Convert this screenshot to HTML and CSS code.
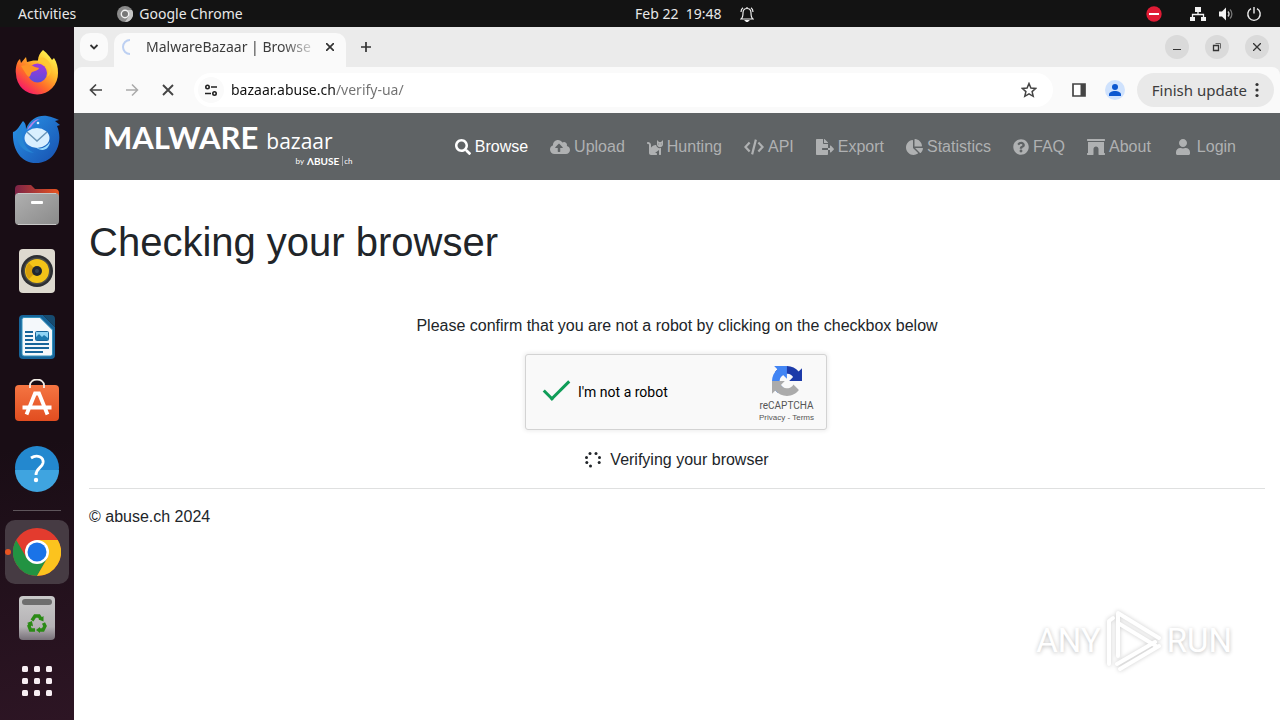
FILE: index.html
```html
<!DOCTYPE html>
<html lang="en">

<head>
    <meta charset="UTF-8">
    <meta name="viewport" content="width=device-width, initial-scale=1.0">
    <title>MalwareBazaar | Browse</title>
    <link rel="stylesheet" href="styles.css">
</head>

<body>
    <!-- Desktop top bar -->
    <header class="topbar">
        <div class="topbar-group topbar-left">
            <button class="topbar-btn">Activities</button>
            <button class="topbar-btn topbar-app">
                <svg width="16" height="16" viewBox="0 0 16 16"><circle cx="8" cy="8" r="8" fill="#8a8a8a"/><path d="M8 4h7A8 8 0 0 1 8 16l4-6" fill="#c4c4c4"/><circle cx="8" cy="8" r="3.7" fill="#777" stroke="#f2f2f2" stroke-width="1.4"/></svg>
                Google Chrome
            </button>
        </div>
        <button class="topbar-btn topbar-clock">
            <span>Feb 22&nbsp; 19:48</span>
            <svg width="14" height="16" viewBox="0 0 14 16" fill="none" stroke="#eee" stroke-width="1.2"><path d="M1 13c2-1.500 2-3 2-6 0-3 1.500-4.500 4-4.500S11 4 11 7c0 3 0 4.500 2 6zM1 6c0-2 1-3.500 2-4.200M13 6c0-2-1-3.500-2-4.200M7 2.500V1"/><path d="M5.500 14.500h3L7 16z" fill="#eee"/></svg>
        </button>
        <div class="topbar-group topbar-right">
            <svg class="status-alert" width="16" height="16" viewBox="0 0 16 16"><circle cx="8" cy="8" r="7.700" fill="#e01b35"/><path d="M3 8h10" stroke="#fff" stroke-width="2"/></svg>
            <svg width="16" height="16" viewBox="0 0 16 16" fill="#f2f2f2"><path d="M5 1h6v5H5zM0 11h5v4H0zM11 11h5v4h-5z"/><path d="M8 6v3M2.500 11V8.500h11V11" fill="none" stroke="#f2f2f2" stroke-width="1.300"/></svg>
            <svg width="16" height="16" viewBox="0 0 16 16"><path d="M1 5.500h3L8 1.500v13l-4-4H1z" fill="#f2f2f2"/><path d="M10 5.500c1.300 1.500 1.300 3.500 0 5" fill="none" stroke="#ccc" stroke-width="1.300"/><path d="M12 3.500c2.500 2.500 2.500 6.500 0 9" fill="none" stroke="#777" stroke-width="1.300"/></svg>
            <svg width="16" height="16" viewBox="0 0 16 16" fill="none" stroke="#eee" stroke-width="1.400"><path d="M5 2.700a6.200 6.200 0 1 0 6 0M8 1v6.500"/></svg>
        </div>
    </header>

    <div class="desktop">
        <!-- Dock -->
        <nav class="dock" aria-label="Dock">
            <button class="dock-item" aria-label="Firefox">
                <svg width="48" height="48" viewBox="0 0 48 48">
                    <defs>
                        <linearGradient id="fox" x1=".85" y1=".1" x2=".2" y2=".95"><stop offset="0" stop-color="#fff44f"/><stop offset=".35" stop-color="#ffb52a"/><stop offset=".65" stop-color="#ff6a2a"/><stop offset="1" stop-color="#f5156c"/></linearGradient>
                        <linearGradient id="globe" x1="0" y1="0" x2="0" y2="1"><stop offset="0" stop-color="#a238df"/><stop offset="1" stop-color="#5b4cd8"/></linearGradient>
                    </defs>
                    <path d="M30 1c5 4 7 7 9 10l2-2c3 5 4 9 4 15a21 21 0 0 1-42 1c-1-6 1-13 4-15l1 4 5-6 1 5c4-1 8-2 11-1 0-5 2-8 5-11z" fill="url(#fox)"/>
                    <circle cx="24.500" cy="24" r="9.500" fill="url(#globe)"/>
                    <path d="M8 17c7-2 11-1 14 1l4 1c-1 3-5 3-7 4-2 2-1 4-3 5-3-2-4-5-8-11z" fill="#ff9427"/>
                    <path d="M24 13c10-1 14 8 10 15 7-5 5-14-1-18-4-3-8-1-9 3z" fill="#ffc832"/>
                </svg>
            </button>
            <button class="dock-item" aria-label="Thunderbird">
                <svg width="50" height="50" viewBox="0 0 50 50">
                    <defs><linearGradient id="bird" x1="0" y1="0" x2="1" y2="1"><stop offset="0" stop-color="#2a96ea"/><stop offset="1" stop-color="#174fae"/></linearGradient></defs>
                    <path d="M1 18c4-1 7-7 10-11 3 3 3 5 3 8 4-10 12-14 21-13 5 1 8 2 12 4l-4 1 5 4-3 1c7 16-2 37-21 37C8 49 0 34 1 18z" fill="url(#bird)"/>
                    <path d="M15 16c4-8 9-11 13-11-5 2-7 5-9 8z" fill="#b582e8"/>
                    <path d="M5 18l5-7c-1 11 0 22 12 28C10 38 4 29 5 18z" fill="#2685d4"/>
                    <ellipse cx="25" cy="24" rx="12.500" ry="10" fill="#d9efff"/>
                    <path d="M15 18l10 9 10-9" fill="none" stroke="#6c96b8" stroke-width="1.500"/>
                    <path d="M23 33c5 3 11 1 15-5-1 7-7 11-15 5z" fill="#9adcff"/>
                    <circle cx="26" cy="9" r="1.300" fill="#d8f0ff"/>
                </svg>
            </button>
            <button class="dock-item" aria-label="Files">
                <svg width="48" height="48" viewBox="0 0 48 48">
                    <defs>
                        <linearGradient id="folder" x1="0" x2="1"><stop offset="0" stop-color="#7b2347"/><stop offset="1" stop-color="#e95420"/></linearGradient>
                        <linearGradient id="drawer" x1="0" y1="0" x2="1" y2="1"><stop offset="0" stop-color="#b0b0b0"/><stop offset="1" stop-color="#8a8a8a"/></linearGradient>
                    </defs>
                    <path d="M2 8a4 4 0 0 1 4-4h12l4 4h20a4 4 0 0 1 4 4v12H2z" fill="url(#folder)"/>
                    <rect x="2" y="12" width="44" height="32" rx="4" fill="url(#drawer)"/>
                    <path d="M5 12.500h38M5 43.500h38" stroke="#c8c8c8"/>
                    <rect x="18" y="20" width="12" height="3" rx="1" fill="#fff"/>
                </svg>
            </button>
            <button class="dock-item" aria-label="Rhythmbox">
                <svg width="48" height="48" viewBox="0 0 48 48">
                    <rect x="6" y="2" width="36" height="44" rx="4" fill="#ddd9cf"/>
                    <circle cx="24" cy="24" r="16" fill="#2d2f33"/>
                    <circle cx="24" cy="24" r="13.500" fill="#4b4c48"/>
                    <circle cx="24" cy="24" r="12" fill="#f2c318"/>
                    <path d="M16 16a11.500 11.500 0 0 0 0 16l8-8z" fill="#d69e0b"/>
                    <circle cx="24" cy="24" r="5" fill="#202730"/>
                    <circle cx="24" cy="24" r="2" fill="#34424f"/>
                </svg>
            </button>
            <button class="dock-item" aria-label="LibreOffice Writer">
                <svg width="48" height="48" viewBox="0 0 48 48">
                    <path d="M10 2h20l12 12v28a4 4 0 0 1-4 4H10a4 4 0 0 1-4-4V6a4 4 0 0 1 4-4z" fill="#17659a"/>
                    <path d="M30 2h8a4 4 0 0 1 4 4v8z" fill="#164b70"/>
                    <path d="M11 4.500h16L39.500 17v24a2 2 0 0 1-2 2H11a2 2 0 0 1-2-2V6.500a2 2 0 0 1 2-2z" fill="#f4f8fb" stroke="#3292bd"/>
                    <path d="M12 19h8M12 23h8M12 27h8M12 31h24M12 35h24M12 39h18" stroke="#17659a" stroke-width="2"/>
                    <rect x="22.500" y="18.500" width="13" height="9" rx="1" fill="#8fd3f4" stroke="#17659a"/>
                    <path d="M23 27v-3l3-3 3 3 2-2 4 3v2z" fill="#1d79af"/>
                </svg>
            </button>
            <button class="dock-item" aria-label="Ubuntu Software">
                <svg width="48" height="48" viewBox="0 0 48 48">
                    <defs><linearGradient id="bag" x1="0" y1="0" x2="0" y2="1"><stop offset="0" stop-color="#f57542"/><stop offset="1" stop-color="#e14d20"/></linearGradient></defs>
                    <rect x="2" y="6" width="44" height="36" rx="4" fill="url(#bag)"/>
                    <path d="M17 9V6a7 5.500 0 0 1 14 0v3" fill="none" stroke="#f3ede6" stroke-width="1.800"/>
                    <path d="M13.500 35.500l8.500-21h4l8.500 21M9.500 28.500h29" fill="none" stroke="#fff" stroke-width="3.800"/>
                </svg>
            </button>
            <button class="dock-item" aria-label="Help">
                <svg width="48" height="48" viewBox="0 0 48 48">
                    <circle cx="24" cy="23" r="22" fill="#2388cf"/>
                    <path d="M2 25h44a22 22 0 0 1-44 0z" fill="#3fa4e0"/>
                    <path d="M18 13c6-4 13-1 12 5-1 5-7 5-7 12" fill="none" stroke="#fff" stroke-width="2.800"/>
                    <circle cx="23" cy="35" r="2.200" fill="#fff"/>
                </svg>
            </button>
            <hr class="dock-line">
            <button class="dock-item dock-active" aria-label="Google Chrome">
                <svg width="48" height="48" viewBox="0 0 48 48">
                    <circle cx="24" cy="24" r="24" fill="#e33b2e"/>
                    <path d="M3.200 12A24 24 0 0 0 24 48l10.400-18-10.400 6-10.400-6z" fill="#229342"/>
                    <path d="M24 12h20.800A24 24 0 0 1 24 48l10.400-18z" fill="#fcc31e"/>
                    <circle cx="24" cy="24" r="12" fill="#fff"/>
                    <circle cx="24" cy="24" r="9.500" fill="#1a73e8"/>
                </svg>
            </button>
            <button class="dock-item" aria-label="Trash">
                <svg width="48" height="48" viewBox="0 0 48 48">
                    <defs><linearGradient id="bin" x1="0" y1="0" x2="0" y2="1"><stop offset="0" stop-color="#c9c9c9"/><stop offset=".7" stop-color="#b5b2b5"/><stop offset="1" stop-color="#777078"/></linearGradient></defs>
                    <rect x="6" y="2" width="36" height="44" rx="4" fill="url(#bin)"/>
                    <rect x="9" y="5" width="30" height="6" rx="3" fill="#6e6e6e"/>
                    <g fill="none" stroke="#2b8a16" stroke-width="3.400">
                        <path d="M19 26.500l3-4.500h4l2 3"/>
                        <path d="M30.500 29l1.500 3-2 4h-4"/>
                        <path d="M22 36h-4.500l-1.500-4 2-3"/>
                    </g>
                    <path d="M30.500 22v5.500l-5-2zM27 33v6l-4-3zM14 29l5-2 1 5.500z" fill="#2b8a16"/>
                </svg>
            </button>
            <button class="dock-item dock-apps" aria-label="Show applications">
                <svg width="30" height="30" viewBox="0 0 30 30" fill="#f7eef3"><rect width="6" height="6" rx="1.500"/><rect x="12" width="6" height="6" rx="1.500"/><rect x="24" width="6" height="6" rx="1.500"/><rect y="12" width="6" height="6" rx="1.500"/><rect x="12" y="12" width="6" height="6" rx="1.500"/><rect x="24" y="12" width="6" height="6" rx="1.500"/><rect y="24" width="6" height="6" rx="1.500"/><rect x="12" y="24" width="6" height="6" rx="1.500"/><rect x="24" y="24" width="6" height="6" rx="1.500"/></svg>
            </button>
        </nav>

        <!-- Browser window -->
        <div class="browser">
            <div class="tabstrip">
                <button class="tab-search" aria-label="Search tabs">
                    <svg width="10" height="10" viewBox="0 0 10 10" fill="none" stroke="#333" stroke-width="1.800"><path d="M1.500 3L5 6.500 8.500 3"/></svg>
                </button>
                <div class="tab">
                    <svg width="16" height="16" viewBox="0 0 16 16" fill="none" stroke="#bdd0f2" stroke-width="2"><path d="M9 1a7 7 0 0 0 0 14"/></svg>
                    <span class="tab-title">MalwareBazaar | Browse</span>
                    <button class="icon-btn tab-close" aria-label="Close tab">
                        <svg width="8" height="8" viewBox="0 0 8 8" stroke="#333" stroke-width="1.700"><path d="M0 0l8 8M8 0L0 8"/></svg>
                    </button>
                </div>
                <button class="icon-btn tab-new" aria-label="New tab">
                    <svg width="12" height="12" viewBox="0 0 12 12" stroke="#333" stroke-width="1.700"><path d="M6 1v10M1 6h10"/></svg>
                </button>
                <div class="window-controls">
                    <button aria-label="Minimize"><svg width="10" height="10" viewBox="0 0 10 10"><path d="M1 7.500h8" stroke="#333"/></svg></button>
                    <button aria-label="Restore"><svg width="10" height="10" viewBox="0 0 10 10" fill="none" stroke="#333"><path d="M1.500 3.500h5v5h-5z" stroke-width="1.300"/><path d="M3.500 1.500h5v5" stroke="#666"/></svg></button>
                    <button aria-label="Close"><svg width="8" height="8" viewBox="0 0 8 8" stroke="#333" stroke-width="1.300"><path d="M0 0l8 8M8 0L0 8"/></svg></button>
                </div>
            </div>

            <div class="toolbar">
                <div class="toolbar-nav">
                    <button class="icon-btn" aria-label="Back"><svg width="14" height="14" viewBox="0 0 14 14" fill="none" stroke="#444" stroke-width="1.700"><path d="M13 7H2M7 1.500L1.500 7 7 12.500"/></svg></button>
                    <button class="icon-btn" aria-label="Forward"><svg width="14" height="14" viewBox="0 0 14 14" fill="none" stroke="#aaa" stroke-width="1.500"><path d="M1 7h11M7 1.500L12.500 7 7 12.500"/></svg></button>
                    <button class="icon-btn" aria-label="Stop loading"><svg width="14" height="14" viewBox="0 0 14 14" stroke="#444" stroke-width="1.900"><path d="M2 2l10 10M12 2L2 12"/></svg></button>
                </div>
                <div class="address">
                    <button class="site-info" aria-label="Site information">
                        <svg width="14" height="14" viewBox="0 0 14 14" fill="none" stroke="#222" stroke-width="1.600"><circle cx="3.500" cy="4" r="1.700"/><path d="M7 4h6M1 10.500h6"/><circle cx="10.500" cy="10.500" r="1.700"/></svg>
                    </button>
                    <input class="address-input" type="text" aria-label="Address" value="bazaar.abuse.ch/verify-ua/">
                    <button class="icon-btn" aria-label="Bookmark this tab"><svg width="16" height="16" viewBox="0 0 16 16" fill="none" stroke="#444" stroke-width="1.500"><path d="M8 1.500l1.900 4.500 4.900.4-3.700 3.200 1.100 4.700L8 11.800l-4.200 2.500 1.100-4.700L1.200 6.400 6.100 6z"/></svg></button>
                </div>
                <button class="icon-btn" aria-label="Side panel"><svg width="16" height="16" viewBox="0 0 16 16"><path d="M2 2h12v12H2z" fill="#fff" stroke="#444" stroke-width="1.700"/><path d="M9.500 2H14v12H9.500z" fill="#444"/></svg></button>
                <button class="icon-btn" aria-label="Profile"><svg width="20" height="20" viewBox="0 0 20 20"><circle cx="10" cy="10" r="10" fill="#cfe2fd"/><circle cx="10" cy="7" r="3" fill="#0b57d0"/><path d="M4 16v-1.500c0-2 3-3.500 6-3.500s6 1.500 6 3.500V16z" fill="#0b57d0"/></svg></button>
                <button class="update-btn">Finish update
                    <svg width="4" height="16" viewBox="0 0 4 16" fill="#333"><circle cx="2" cy="2.500" r="1.600"/><circle cx="2" cy="8" r="1.600"/><circle cx="2" cy="13.500" r="1.600"/></svg>
                </button>
            </div>

            <!-- Page -->
            <div class="page">
                <nav class="navbar">
                    <a class="brand" href="#">
                        <span class="brand-top"><span class="brand-name">MALWARE</span><span class="brand-sub">bazaar</span></span>
                        <span class="brand-by"><span class="brand-small">by</span><span class="brand-abuse">ΛBUSE</span><span class="brand-ch">ch</span></span>
                    </a>
                    <ul class="nav-links">
                        <li><a class="active" href="#"><svg viewBox="0 0 512 512"><path d="M505 442.7L405.3 343c-4.500-4.500-10.600-7-17-7H372c27.600-35.300 44-79.700 44-128C416 93.100 322.900 0 208 0S0 93.100 0 208s93.100 208 208 208c48.300 0 92.700-16.400 128-44v16.300c0 6.400 2.500 12.500 7 17l99.700 99.700c9.400 9.400 24.600 9.400 33.900 0l28.300-28.300c9.400-9.400 9.400-24.600.1-34zM208 336c-70.700 0-128-57.200-128-128 0-70.700 57.200-128 128-128 70.700 0 128 57.200 128 128 0 70.700-57.200 128-128 128z"/></svg>Browse</a></li>
                        <li><a href="#"><svg viewBox="0 0 640 512"><path d="M537.6 226.6c4.100-10.700 6.400-22.400 6.400-34.600 0-53-43-96-96-96-19.700 0-38.100 6-53.300 16.200C367 64.200 315.300 32 256 32c-88.400 0-160 71.600-160 160 0 2.700.1 5.400.2 8.100C40.200 219.800 0 273.200 0 336c0 79.500 64.500 144 144 144h368c70.700 0 128-57.300 128-128 0-61.900-44-113.600-102.400-125.400zM393.400 288H328v112c0 8.800-7.200 16-16 16h-48c-8.800 0-16-7.200-16-16V288h-65.400c-14.300 0-21.400-17.200-11.300-27.300l105.400-105.400c6.200-6.200 16.400-6.200 22.600 0l105.400 105.400c10.100 10.100 2.900 27.300-11.300 27.300z"/></svg>Upload</a></li>
                        <li><a href="#"><svg viewBox="0 0 512 512"><path d="M290.590 192c-20.180 0-106.820 1.980-162.590 85.950V192c0-52.940-43.060-96-96-96-17.670 0-32 14.330-32 32s14.330 32 32 32c17.640 0 32 14.360 32 32v256c0 35.300 28.700 64 64 64h176c8.840 0 16-7.160 16-16v-16c0-17.670-14.330-32-32-32h-32l128-96v144c0 8.840 7.160 16 16 16h32c8.840 0 16-7.160 16-16V289.860c-10.290 2.670-20.890 4.540-32 4.540-61.810 0-113.520-44.050-125.410-102.400zM448 96h-64l-64-64v134.400c0 53.020 42.980 96 96 96s96-42.980 96-96V32l-64 64zm-72 80c-8.840 0-16-7.160-16-16s7.160-16 16-16 16 7.160 16 16-7.160 16-16 16zm80 0c-8.840 0-16-7.160-16-16s7.160-16 16-16 16 7.160 16 16-7.160 16-16 16z"/></svg>Hunting</a></li>
                        <li><a href="#"><svg viewBox="0 0 640 512"><path d="M180 110L45 256l135 146M460 110l135 146-135 146M380 20L260 492" fill="none" stroke="currentColor" stroke-width="70"/></svg>API</a></li>
                        <li><a href="#"><svg viewBox="0 0 576 512"><path d="M384 121.900c0-6.300-2.500-12.400-7-16.900L279.100 7c-4.500-4.500-10.600-7-17-7H256v128h128zM571 308l-95.700-96.400c-10.100-10.100-27.400-3-27.400 11.300V288h-64v64h64v65.200c0 14.300 17.300 21.400 27.400 11.300L571 332c6.600-6.600 6.600-17.400 0-24zm-379 28v-32c0-8.800 7.200-16 16-16h176V160H248c-13.200 0-24-10.800-24-24V0H24C10.700 0 0 10.700 0 24v464c0 13.300 10.700 24 24 24h336c13.300 0 24-10.700 24-24V352H208c-8.800 0-16-7.200-16-16z"/></svg>Export</a></li>
                        <li><a href="#"><svg viewBox="0 0 544 512"><path d="M527.790 288H290.500l158.030 158.030c6.040 6.040 15.980 6.530 22.190.68 38.700-36.460 65.320-85.610 73.130-140.860 1.340-9.460-6.510-17.850-16.060-17.850zm-15.830-64.800C503.720 103.740 408.260 8.280 288.800.04 279.680-.59 272 7.100 272 16.240V240h223.770c9.140 0 16.820-7.680 16.190-16.800zM224 288V50.710c0-9.550-8.390-17.400-17.840-16.060C86.990 51.490-4.100 155.600.14 280.370 4.500 408.510 114.830 513.590 243.030 511.980c50.400-.63 96.970-16.870 135.260-44.030 7.900-5.600 8.420-17.230 1.570-24.080L224 288z"/></svg>Statistics</a></li>
                        <li><a href="#"><svg viewBox="0 0 512 512"><path d="M504 256c0 136.997-111.043 248-248 248S8 392.997 8 256C8 119.083 119.043 8 256 8s248 111.083 248 248zM262.655 90c-54.497 0-89.255 22.957-116.549 63.758-3.536 5.286-2.353 12.415 2.715 16.258l34.699 26.310c5.205 3.947 12.621 3.008 16.665-2.122 17.864-22.658 30.113-35.797 57.303-35.797 20.429 0 45.698 13.148 45.698 32.958 0 14.976-12.363 22.667-32.534 33.976C247.128 238.528 216 254.941 216 296v4c0 6.627 5.373 12 12 12h56c6.627 0 12-5.373 12-12v-1.333c0-28.462 83.186-29.647 83.186-106.667 0-58.002-60.165-102-116.531-102zM256 338c-25.365 0-46 20.635-46 46 0 25.364 20.635 46 46 46s46-20.636 46-46c0-25.365-20.635-46-46-46z"/></svg>FAQ</a></li>
                        <li><a href="#"><svg viewBox="0 0 576 512"><path d="M560 448h-16V96H32v352H16c-8.840 0-16 7.160-16 16v32c0 8.840 7.160 16 16 16h176c8.840 0 16-7.160 16-16V320c0-44.160 35.820-80 80-80s80 35.840 80 80v176c0 8.840 7.160 16 16 16h176c8.840 0 16-7.160 16-16v-32c0-8.840-7.160-16-16-16zm0-448H16C7.160 0 0 7.160 0 16v32c0 8.840 7.160 16 16 16h544c8.840 0 16-7.160 16-16V16c0-8.840-7.160-16-16-16z"/></svg>About</a></li>
                        <li><a href="#"><svg class="icon-fixed" viewBox="0 0 448 512"><path d="M224 256c70.700 0 128-57.300 128-128S294.700 0 224 0 96 57.300 96 128s57.300 128 128 128zm89.600 32h-16.700c-22.200 10.200-46.900 16-72.900 16s-50.600-5.800-72.900-16h-16.700C60.200 288 0 348.200 0 422.400V464c0 26.500 21.500 48 48 48h352c26.500 0 48-21.500 48-48v-41.600c0-74.200-60.200-134.400-134.400-134.400z"/></svg>Login</a></li>
                    </ul>
                </nav>

                <main class="content">
                    <h1>Checking your browser</h1>
                    <form class="verify">
                        <p>Please confirm that you are not a robot by clicking on the checkbox below</p>
                        <div class="captcha">
                            <input class="captcha-check" type="checkbox" id="robot" checked>
                            <label for="robot">I'm not a robot</label>
                            <div class="captcha-brand">
                                <svg width="30" height="30" viewBox="0 0 64 64"><path d="M64 31.955l-.033-1.370V4.687l-7.160 7.160C50.948 4.674 42.033.093 32.050.093c-10.400 0-19.622 4.960-25.458 12.640l11.736 11.860a15.550 15.550 0 0 1 4.754-5.334c2.050-1.600 4.952-2.906 8.968-2.906.485 0 .86.057 1.135.163 4.976.393 9.288 3.140 11.828 7.124l-8.307 8.307L64 31.953" fill="#1c3aa9"/><path d="M31.862.094l-1.370.033H4.594l7.160 7.160C4.580 13.147 0 22.060 0 32.046c0 10.400 4.960 19.622 12.640 25.458L24.500 45.768a15.550 15.550 0 0 1-5.334-4.754c-1.600-2.050-2.906-4.952-2.906-8.968 0-.485.057-.86.163-1.135.393-4.976 3.140-9.288 7.124-11.828l8.307 8.307L31.860.095" fill="#4285f4"/><path d="M.001 32.045l.033 1.370v25.898l7.160-7.160c5.860 7.173 14.774 11.754 24.760 11.754 10.400 0 19.622-4.960 25.458-12.640l-11.736-11.860a15.550 15.550 0 0 1-4.754 5.334c-2.050 1.600-4.952 2.906-8.968 2.906-.485 0-.86-.057-1.135-.163-4.976-.393-9.288-3.140-11.828-7.124l8.307-8.307c-10.522.04-22.400.066-27.295-.005" fill="#ababab"/></svg>
                                <span class="captcha-name">reCAPTCHA</span>
                                <span class="captcha-links"><a href="#">Privacy</a> - <a href="#">Terms</a></span>
                            </div>
                        </div>
                        <p class="status">
                            <svg width="16" height="16" viewBox="0 0 16 16" fill="#212529"><circle cx="5" cy="1.500" r="1.500"/><circle cx="11" cy="1.500" r="1.500"/><circle cx="1.500" cy="5.500" r="1.500"/><circle cx="14.500" cy="5.500" r="1.500"/><circle cx="1.800" cy="10.500" r="1.500"/><circle cx="14.200" cy="10.500" r="1.500"/><circle cx="5.500" cy="14" r="1.500"/></svg>
                            Verifying your browser
                        </p>
                    </form>
                    <hr class="divider">
                    <footer>© abuse.ch 2024</footer>
                </main>

                <div class="watermark">
                    <span>ANY</span>
                    <svg width="58" height="64" viewBox="0 0 58 64" fill="none" stroke="#fff" stroke-width="4" stroke-linejoin="round" stroke-linecap="round"><path d="M4 55V12l4-3"/><path d="M13 47V4l41 25"/><path d="M13 14l38 23"/><path d="M12 55l38-22M15 60l39-23"/></svg>
                    <span>RUN</span>
                </div>
            </div>
        </div>
    </div>
</body>

</html>
```
FILE: styles.css
```css
/* General styling */
* {
    box-sizing: border-box;
}

body {
    margin: 0;
    min-height: 100vh;
    display: flex;
    flex-direction: column;
    font-family: "Liberation Sans", Arial, sans-serif;
    font-size: 16px;
    line-height: 24px;
    color: #212529;
    background-color: #190d15;
}

button {
    padding: 0;
    border: none;
    background: none;
    color: inherit;
    font: inherit;
    cursor: pointer;
}

svg {
    display: block;
    flex-shrink: 0;
}

/* Desktop top bar */
.topbar {
    display: flex;
    justify-content: space-between;
    align-items: center;
    height: 27px;
    padding: 0 18px;
    background-color: #131313;
    color: #e8e8e8;
    font-family: "Noto Sans", sans-serif;
    font-size: 14px;
}

.topbar-group,
.topbar-btn {
    display: flex;
    align-items: center;
}

.topbar-left {
    gap: 41px;
}

.topbar-app {
    gap: 6px;
}

.topbar-clock {
    gap: 18px;
}

.topbar-right {
    gap: 12px;
}

.status-alert {
    margin-right: 16px;
}

.desktop {
    flex: 1;
    display: flex;
}

/* Dock */
.dock {
    width: 74px;
    flex-shrink: 0;
    display: flex;
    flex-direction: column;
    align-items: center;
    padding-top: 13px;
    background: linear-gradient(170deg, #190d15 60%, #2d1524);
}

.dock-item {
    position: relative;
    display: flex;
    justify-content: center;
    align-items: center;
    width: 64px;
    height: 64px;
    margin: 1px 0;
    border-radius: 10px;
}

.dock-active {
    background-color: #463b43;
}

/* Running indicator */
.dock-active::before {
    content: "";
    position: absolute;
    left: 0;
    width: 6px;
    height: 6px;
    border-radius: 3px;
    background-color: #e95420;
}

.dock-line {
    width: 48px;
    height: 1px;
    margin: 8px 0;
    border: none;
    background-color: #5e555b;
}

.dock-apps {
    height: 58px;
}

/* Browser window */
.browser {
    flex: 1;
    min-width: 0;
    display: flex;
    flex-direction: column;
    background-color: #ebebeb;
    font-family: "Noto Sans", sans-serif;
    font-size: 14px;
    color: #3c3c3c;
}

.tabstrip {
    display: flex;
    align-items: center;
    height: 40px;
    padding: 0 11px 0 6px;
}

.tab-search {
    display: flex;
    justify-content: center;
    align-items: center;
    width: 28px;
    height: 28px;
    border-radius: 10px;
    background-color: #fafafa;
}

.tab {
    display: flex;
    align-items: center;
    align-self: flex-end;
    width: 232px;
    height: 34px;
    margin-left: 6px;
    padding: 0 6px 6px 7px;
    border-radius: 10px 10px 0 0;
    background-color: #fafafa;
}

.tab-title {
    flex: 1;
    min-width: 0;
    margin-left: 9px;
    overflow: hidden;
    white-space: nowrap;
    mask-image: linear-gradient(to right, #000 78%, transparent);
}

.icon-btn {
    display: flex;
    justify-content: center;
    align-items: center;
    width: 28px;
    height: 28px;
    flex-shrink: 0;
}

.tab-close {
    width: 20px;
}

.tab-new {
    margin-left: 6px;
}

.window-controls {
    display: flex;
    gap: 16px;
    margin-left: auto;
}

.window-controls button {
    display: flex;
    justify-content: center;
    align-items: center;
    width: 24px;
    height: 24px;
    border-radius: 50%;
    background-color: #dadada;
}

.toolbar {
    display: flex;
    align-items: center;
    gap: 8px;
    height: 46px;
    padding: 0 6px 0 8px;
    border-radius: 8px 8px 0 0;
    background-color: #fafafa;
}

.toolbar-nav {
    display: flex;
    gap: 8px;
}

.address {
    flex: 1;
    display: flex;
    align-items: center;
    height: 34px;
    margin: 0 4px;
    padding: 0 10px 0 4px;
    border-radius: 17px;
    background-color: #fff;
}

.site-info {
    display: flex;
    justify-content: center;
    align-items: center;
    width: 26px;
    height: 26px;
    border-radius: 50%;
    background-color: #fafafa;
}

/* Host is dark, the path after it is grey */
.address-input {
    flex: 1;
    min-width: 0;
    margin-left: 7px;
    padding: 0;
    border: none;
    outline: none;
    font: inherit;
    color: #111;
    background: linear-gradient(to right, #111 105px, #707070 105px);
    background-clip: text;
    -webkit-background-clip: text;
    -webkit-text-fill-color: transparent;
}

.update-btn {
    display: flex;
    align-items: center;
    gap: 8px;
    height: 34px;
    padding: 0 15px;
    border-radius: 17px;
    background-color: #e9e9e9;
    font-size: 15px;
}

/* Page */
.page {
    position: relative;
    flex: 1;
    background-color: #fff;
    color: #212529;
    font-family: "Liberation Sans", Arial, sans-serif;
    font-size: 16px;
}

.navbar {
    display: flex;
    justify-content: space-between;
    align-items: center;
    height: 67px;
    padding: 0 44px 0 29px;
    background-color: #5f6365;
}

.brand {
    display: flex;
    flex-direction: column;
    color: #fff;
    text-decoration: none;
}

.brand-top {
    display: flex;
    align-items: baseline;
    gap: 8px;
    padding-right: 20px;
    line-height: 30px;
}

.brand-name {
    font-family: Lato, sans-serif;
    font-size: 31px;
    font-weight: bold;
}

.brand-sub {
    font-family: "Open Sans", sans-serif;
    font-size: 21px;
}

.brand-by {
    display: flex;
    justify-content: flex-end;
    align-items: center;
    gap: 3px;
    margin-bottom: 6px;
    font-family: Lato, sans-serif;
    line-height: 10px;
}

.brand-small {
    font-size: 8px;
}

.brand-abuse {
    font-size: 10px;
    font-weight: bold;
}

.brand-ch {
    padding-left: 1px;
    border-left: 1px solid #aaa;
    font-size: 8px;
}

.nav-links {
    display: flex;
    gap: 22px;
    margin: 0;
    padding: 0;
    list-style: none;
}

.nav-links a {
    display: flex;
    align-items: center;
    gap: 4px;
    color: #afb1b2;
    text-decoration: none;
}

.nav-links a.active {
    color: #fff;
}

.nav-links svg {
    width: auto;
    height: 16px;
    fill: currentColor;
}

.nav-links .icon-fixed {
    width: 20px;
}

.content {
    padding: 38px 15px;
}

h1 {
    margin: 0 0 48px;
    font-size: 40px;
    font-weight: normal;
    line-height: 48px;
}

.verify {
    display: flex;
    flex-direction: column;
    align-items: center;
}

.verify p {
    margin: 0 0 16px;
}

/* Captcha box */
.captcha {
    display: flex;
    align-items: center;
    width: 302px;
    height: 76px;
    margin: 0 2px 18px 0;
    padding: 0 12px;
    border: 1px solid #d3d3d3;
    border-radius: 3px;
    background-color: #f9f9f9;
    box-shadow: 0 0 4px 1px rgba(0, 0, 0, 0.08);
    font-family: Roboto, sans-serif;
    font-size: 14px;
    color: #000;
}

.captcha-check {
    appearance: none;
    display: flex;
    justify-content: center;
    align-items: flex-start;
    width: 36px;
    height: 36px;
    margin: 0 4px 0 0;
}

.captcha-check:checked::before {
    content: "";
    width: 10px;
    height: 23px;
    border: solid #0f9d58;
    border-width: 0 3px 3px 0;
    transform: rotate(45deg);
}

.captcha-brand {
    display: flex;
    flex-direction: column;
    align-items: center;
    margin: 4px 0 0 auto;
    color: #555;
}

.captcha-name {
    margin-top: 3px;
    font-size: 10px;
    line-height: 14px;
}

.captcha-links {
    font-family: "Liberation Sans", Arial, sans-serif;
    font-size: 8px;
    line-height: 10px;
}

.captcha-links a {
    color: #555;
    text-decoration: none;
}

.status {
    display: flex;
    align-items: center;
    gap: 9px;
}

.divider {
    height: 1px;
    margin: 0 0 16px;
    border: none;
    background-color: #dfe0e0;
}

/* Watermark over the page corner */
.watermark {
    position: absolute;
    right: 48px;
    bottom: 47px;
    display: flex;
    align-items: center;
    gap: 4px;
    color: #fff;
    font-family: "Liberation Sans Narrow", Roboto, sans-serif;
    font-size: 33px;
    text-shadow: 0 1px 4px #bbb;
}

.watermark svg {
    filter: drop-shadow(0 0 2px #ccc);
}
```
